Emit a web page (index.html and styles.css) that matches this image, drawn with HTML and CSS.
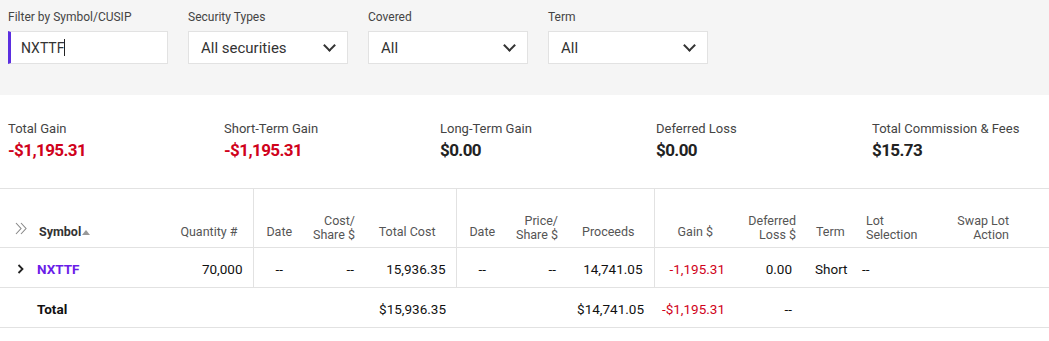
FILE: index.html
```html
<!DOCTYPE html>
<html lang="en">

<head>
    <meta charset="UTF-8">
    <meta name="viewport" content="width=device-width, initial-scale=1.0">
    <title>Realized Gain/Loss</title>
    <link rel="stylesheet" href="styles.css">
</head>

<body>
    <!-- filters -->
    <div class="filters">
        <div class="filter">
            <label>Filter by Symbol/CUSIP</label>
            <div class="box box-input"><span>NXTTF</span><span class="caret"></span></div>
        </div>
        <div class="filter">
            <label>Security Types</label>
            <div class="box"><span>All securities</span><span class="chev"></span></div>
        </div>
        <div class="filter">
            <label>Covered</label>
            <div class="box"><span>All</span><span class="chev"></span></div>
        </div>
        <div class="filter">
            <label>Term</label>
            <div class="box"><span>All</span><span class="chev"></span></div>
        </div>
    </div>

    <!-- summary -->
    <div class="summary">
        <div class="stat">
            <div class="stat-label">Total Gain</div>
            <div class="stat-value neg">-$1,195.31</div>
        </div>
        <div class="stat">
            <div class="stat-label">Short-Term Gain</div>
            <div class="stat-value neg">-$1,195.31</div>
        </div>
        <div class="stat">
            <div class="stat-label">Long-Term Gain</div>
            <div class="stat-value">$0.00</div>
        </div>
        <div class="stat">
            <div class="stat-label">Deferred Loss</div>
            <div class="stat-value">$0.00</div>
        </div>
        <div class="stat">
            <div class="stat-label">Total Commission &amp; Fees</div>
            <div class="stat-value">$15.73</div>
        </div>
    </div>

    <!-- lots table -->
    <table class="lots">
        <colgroup>
            <col class="w32">
            <col class="w128">
            <col class="w93">
            <col class="w52">
            <col class="w60">
            <col class="w91">
            <col class="w52">
            <col class="w62">
            <col class="w84">
            <col class="w81">
            <col class="w71">
            <col class="w50">
            <col class="w94">
            <col>
        </colgroup>
        <thead>
            <tr>
                <th class="expand">
                    <svg width="12" height="13" viewBox="0 0 12 13"><path d="M1 1l5 5.5L1 12M6 1l5 5.5L6 12" fill="none" stroke="#888" stroke-width="1.1"/></svg>
                </th>
                <th class="left sym">Symbol<span class="sort"></span></th>
                <th class="right pr15 sep">Quantity #</th>
                <th class="center">Date</th>
                <th class="right pr10 two">Cost/<br>Share $</th>
                <th class="right pr20 sep">Total Cost</th>
                <th class="center">Date</th>
                <th class="right pr12 two">Price/<br>Share $</th>
                <th class="right pr19 sep">Proceeds</th>
                <th class="right pr22">Gain $</th>
                <th class="right pr10 two">Deferred<br>Loss $</th>
                <th class="left pl10">Term</th>
                <th class="left pl10 two">Lot<br>Selection</th>
                <th class="right pr40 two">Swap Lot<br>Action</th>
            </tr>
        </thead>
        <tbody>
            <tr class="lot">
                <td class="expand">
                    <svg width="8" height="10" viewBox="0 0 8 10"><path d="M1.5 1l4 4-4 4" fill="none" stroke="#222" stroke-width="1.8"/></svg>
                </td>
                <td class="left symbol">NXTTF</td>
                <td class="right pr10 sep">70,000</td>
                <td class="center">--</td>
                <td class="right pr11">--</td>
                <td class="right pr10 sep">15,936.35</td>
                <td class="center">--</td>
                <td class="right pr14">--</td>
                <td class="right pr11 sep">14,741.05</td>
                <td class="right pr10 neg">-1,195.31</td>
                <td class="right pr14">0.00</td>
                <td class="left pl9">Short</td>
                <td class="left pl6">--</td>
                <td></td>
            </tr>
            <tr class="total">
                <td></td>
                <td class="left">Total</td>
                <td></td>
                <td></td>
                <td></td>
                <td class="right pr10">$15,936.35</td>
                <td></td>
                <td></td>
                <td class="right pr10">$14,741.05</td>
                <td class="right pr10 neg">-$1,195.31</td>
                <td class="right pr14">--</td>
                <td></td>
                <td></td>
                <td></td>
            </tr>
        </tbody>
    </table>
</body>

</html>
```

FILE: styles.css
```css
:root {
    --purple: #5b2ee0;
    --red: #d0021b;
    --line: #e2e2e2;
    --text: #222;
    --muted: #555;
}

body {
    margin: 0;
    font-family: Roboto, "Liberation Sans", sans-serif;
    color: var(--text);
    background: #fff;
}

/* filter bar */
.filters {
    display: flex;
    gap: 20px;
    padding: 10px 8px 31px;
    background-color: #f5f5f5;
}

.filter label {
    display: block;
    font-size: 12px;
    line-height: 14px;
    color: #444;
    margin-bottom: 7px;
}

.box {
    box-sizing: border-box;
    width: 160px;
    height: 33px;
    background: #fff;
    border: 1px solid var(--line);
    display: flex;
    align-items: center;
    padding: 0 10px 0 12px;
    font-size: 15px;
    color: #333;
}

.box span:first-child {
    flex: 1;
}

.box-input {
    border-left: 3px solid var(--purple);
    padding-left: 10px;
    font-size: 14px;
}

.box-input span:first-child {
    flex: 0 0 auto;
}

.caret {
    width: 1px;
    height: 17px;
    background: #222;
}

.chev {
    width: 7px;
    height: 7px;
    border-right: 2px solid #333;
    border-bottom: 2px solid #333;
    transform: rotate(45deg);
    margin: -5px 3px 0 0;
}

/* summary */
.summary {
    display: flex;
    padding: 26px 8px 28px;
    border-bottom: 1px solid var(--line);
}

.stat {
    width: 216px;
    flex: 0 0 216px;
}

.stat-label {
    font-size: 13px;
    line-height: 16px;
    color: #444;
}

.stat-value {
    font-size: 17px;
    font-weight: 700;
    line-height: 22px;
    letter-spacing: -0.6px;
    margin: 2px 0 -1px;
}

.neg {
    color: var(--red);
}

/* table */
.lots {
    width: 100%;
    border-collapse: collapse;
    table-layout: fixed;
    font-size: 13px;
}

.w32 { width: 32px; }
.w128 { width: 128px; }
.w93 { width: 93px; }
.w52 { width: 52px; }
.w60 { width: 60px; }
.w91 { width: 91px; }
.w62 { width: 62px; }
.w84 { width: 84px; }
.w81 { width: 81px; }
.w71 { width: 71px; }
.w50 { width: 50px; }
.w94 { width: 94px; }

.lots th {
    height: 58px;
    box-sizing: border-box;
    padding: 0 0 8px;
    vertical-align: bottom;
    font-weight: 400;
    font-size: 12.5px;
    line-height: 14px;
    color: var(--muted);
    border-bottom: 1px solid var(--line);
}

.lots th.two {
    padding-bottom: 5px;
}

.lots td {
    height: 40px;
    box-sizing: border-box;
    padding: 4px 0 0;
    border-bottom: 1px solid var(--line);
    font-size: 13.5px;
    font-weight: 400;
    color: #111;
}

.lots td.neg {
    color: var(--red);
}

.lots th.sep,
.lots .lot td.sep {
    border-right: 1px solid var(--line);
}

.lots .expand {
    text-align: right;
    padding-right: 7px;
}

.lots th.expand {
    padding-right: 5px;
    padding-bottom: 9px;
}

.lots th.sym {
    font-weight: 700;
    color: #333;
    padding-left: 7px;
}

.sort {
    display: inline-block;
    width: 0;
    height: 0;
    border-left: 4px solid transparent;
    border-right: 4px solid transparent;
    border-bottom: 5px solid #999;
    margin-left: 1px;
    vertical-align: 1px;
}

.lots td.symbol {
    color: #6a1de8;
    font-weight: 700;
    padding-left: 5px;
}

.lots .total td.left {
    font-weight: 700;
    padding-left: 5px;
}

.left { text-align: left; }
.right { text-align: right; }
.center { text-align: center; }

.pr10 { padding-right: 10px !important; }
.pr11 { padding-right: 11px !important; }
.pr12 { padding-right: 12px !important; }
.pr14 { padding-right: 14px !important; }
.pr15 { padding-right: 15px !important; }
.pr19 { padding-right: 19px !important; }
.pr20 { padding-right: 20px !important; }
.pr22 { padding-right: 22px !important; }
.pr40 { padding-right: 40px !important; }
.pl6 { padding-left: 6px !important; }
.pl9 { padding-left: 9px !important; }
.pl10 { padding-left: 10px !important; }
```
